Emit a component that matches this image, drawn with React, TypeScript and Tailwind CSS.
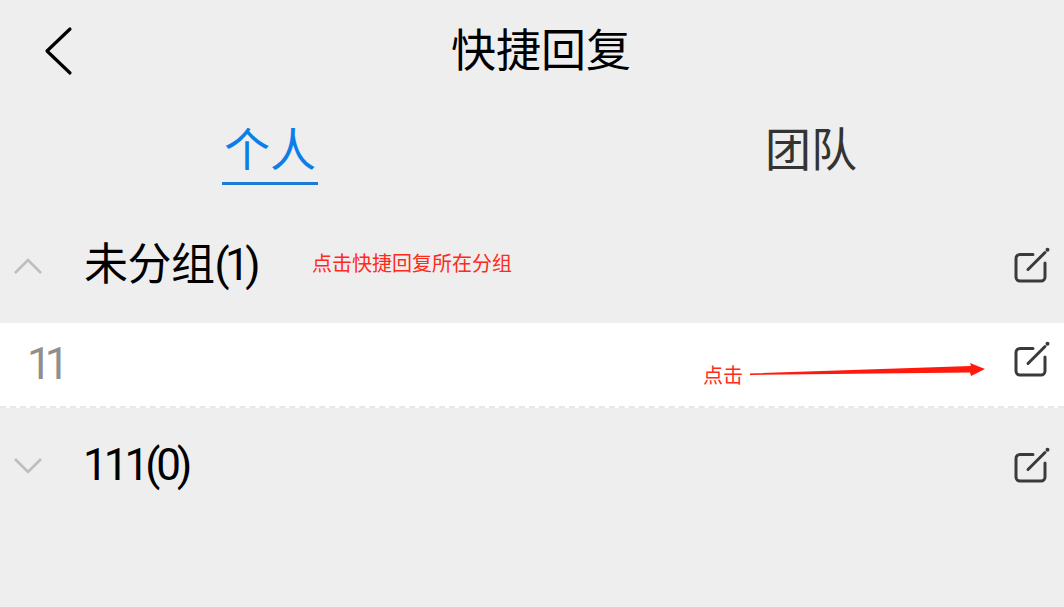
const cjk = "font-['Roboto','Noto_Sans_CJK_SC',sans-serif]";

function EditIcon() {
  return (
    <svg width="36" height="38" viewBox="0 0 36 38" fill="none" className="block">
      <path d="M19 7.5H6a4 4 0 0 0-4 4V30a4 4 0 0 0 4 4h21a4 4 0 0 0 4-4V16" stroke="#3a3a3a" strokeWidth="3" strokeLinecap="round" />
      <path d="M14 22.5 31 5.5" stroke="#3a3a3a" strokeWidth="3" strokeLinecap="round" />
      <circle cx="33.5" cy="2.8" r="2" fill="#3a3a3a" />
    </svg>
  );
}

function Chevron({ up }: { up?: boolean }) {
  return (
    <svg width="30" height="18" viewBox="0 0 30 18" fill="none" className="block">
      <path d={up ? "M2 16 15 3 28 16" : "M2 2 15 15 28 2"} stroke="#bdbdbd" strokeWidth="2.6" />
    </svg>
  );
}

export default function App() {
  return (
    <div className={`${cjk} relative w-[1064px] h-[607px] overflow-hidden bg-[#eeeeee] text-black`}>
      <header className="relative h-[100px] flex items-center justify-center pl-[18px] pt-[2px]">
        <svg width="30" height="50" viewBox="0 0 30 50" fill="none" className="absolute left-[43px] top-[26px]">
          <path d="M27 3 4 25l23 22" stroke="#000" strokeWidth="3.2" strokeLinecap="round" strokeLinejoin="round" />
        </svg>
        <span className="text-[45px] leading-none">快捷回复</span>
      </header>

      <nav className="h-[116px] flex items-start">
        <div className="w-[540px] flex justify-center">
          <div className="flex flex-col items-center w-[96px] pt-[24px] text-[#0d7ee8]">
            <span className="text-[46px] leading-[52px] whitespace-nowrap">个人</span>
            <span className="block w-full h-[3px] bg-[#1a7ad6] mt-[6px]" />
          </div>
        </div>
        <div className="flex-1 pt-[24px] pl-[225px] text-[#333333] text-[46px] leading-[52px]">团队</div>
      </nav>

      <section className="h-[107px] flex items-center pl-[13px] pr-[14px] pb-[8px]">
        <Chevron up />
        <span className="ml-[41px] mb-[2px] text-[44px] leading-none whitespace-nowrap tracking-[-0.5px]">未分组<span className="tracking-[-4.5px]">(1)</span></span>
        <span className="ml-auto"><EditIcon /></span>
      </section>

      <section className="h-[85px] bg-white border-b-2 border-dashed border-[#e8e8e8] flex items-center pl-[27px] pr-[14px] pb-[2px]">
        <span className="text-[#8f8f8f] text-[44px] leading-none tracking-[-7px]">11</span>
        <span className="ml-auto mb-[8px]"><EditIcon /></span>
      </section>

      <section className="h-[112px] flex items-center pl-[13px] pr-[14px] pt-[4px]">
        <Chevron />
        <span className="ml-[40px] mb-[2px] text-[44px] leading-none tracking-[-4px]">111(0)</span>
        <span className="ml-auto"><EditIcon /></span>
      </section>

      <span className="absolute left-[312px] top-[250px] text-[20px] leading-[28px] text-[#ff2a1c] whitespace-nowrap">点击快捷回复所在分组</span>
      <span className="absolute left-[703px] top-[362px] text-[20px] leading-[28px] text-[#ff2a1c]">点击</span>
      <svg width="240" height="20" viewBox="0 0 240 20" className="absolute left-[748px] top-[360px]">
        <polygon points="2,13.5 223,6 222,3 237,9 223,16 222,12.5 2,15" fill="#ff1a0d" />
      </svg>
    </div>
  );
}
